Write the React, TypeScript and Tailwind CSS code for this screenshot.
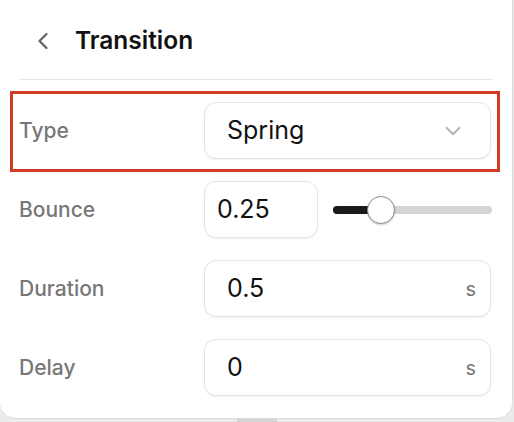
import { ChevronLeft, ChevronDown } from 'lucide-react';

function Field({ value, unit }: { value: string; unit?: string }) {
  return (
    <div className="flex h-[57px] flex-1 items-center justify-between rounded-xl border border-[#e4e4e4] bg-white pl-[22px] pr-[14px] shadow-[0_1px_2px_rgba(0,0,0,0.06)]">
      <span className="text-[25px] text-[#111]">{value}</span>
      {unit && <span className="text-[20px] text-[#777]">{unit}</span>}
    </div>
  );
}

function Row({ label, children }: { label: string; children: React.ReactNode }) {
  return (
    <div className="flex h-[57px] items-center">
      <span className="w-[185px] text-[21px] font-medium text-[#777]">{label}</span>
      <div className="flex flex-1 items-center">{children}</div>
    </div>
  );
}

export default function App() {
  const bounce = 0.25;

  return (
    <div className="h-[422px] w-[514px] overflow-hidden bg-[#ebebeb] font-['Inter',sans-serif]">
      <div className="h-[419px] w-[513px] rounded-b-2xl border-r border-b border-[#dcdcdc] bg-white px-[19px]">
        {/* Header */}
        <div className="flex h-[80px] items-center gap-[18px] border-b border-[#e5e5e5] pl-[10px] pt-[2px]">
          <ChevronLeft className="h-[28px] w-[28px] text-[#666]" strokeWidth={2} />
          <h1 className="text-[24.5px] font-semibold text-[#111]">Transition</h1>
        </div>

        <div className="mr-[2px] flex flex-col gap-[22px] pt-[22px]">
          {/* Type (highlighted) */}
          <div className="relative">
            <Row label="Type">
              <div className="flex h-[57px] flex-1 items-center justify-between rounded-xl border border-[#e4e4e4] bg-white pl-[22px] pr-[24px] shadow-[0_1px_2px_rgba(0,0,0,0.06)]">
                <span className="text-[25px] text-[#111]">Spring</span>
                <ChevronDown className="h-[26px] w-[26px] text-[#b5b5b5]" strokeWidth={1.75} />
              </div>
            </Row>
            <div className="pointer-events-none absolute -top-[11px] -right-[9px] -bottom-[13px] -left-[9px] border-[3px] border-[#d13b23]" />
          </div>

          {/* Bounce */}
          <Row label="Bounce">
            <div className="flex h-[57px] w-[114px] items-center rounded-xl border border-[#e4e4e4] bg-white pl-[12px] shadow-[0_1px_2px_rgba(0,0,0,0.06)]">
              <span className="text-[25px] text-[#111]">0.25</span>
            </div>
            <div className="relative ml-[15px] mr-[-1px] flex h-[28px] flex-1 items-center">
              <div className="h-[8px] w-full rounded-full bg-[#d4d4d4]">
                <div className="h-full rounded-l-full bg-[#1a1a1a]" style={{ width: `${bounce * 100 + 5}%` }} />
              </div>
              <div
                className="absolute top-0 h-[28px] w-[28px] -translate-x-1/2 rounded-full border border-[#8a8a8a] bg-white shadow-[0_1px_2px_rgba(0,0,0,0.2)]"
                style={{ left: `${bounce * 100 + 5}%` }}
              />
            </div>
          </Row>

          <Row label="Duration">
            <Field value="0.5" unit="s" />
          </Row>

          <Row label="Delay">
            <Field value="0" unit="s" />
          </Row>
        </div>
      </div>
      <div className="flex justify-center">
        <div className="h-[3px] w-[40px] bg-[#d4d4d4]" />
      </div>
    </div>
  );
}
